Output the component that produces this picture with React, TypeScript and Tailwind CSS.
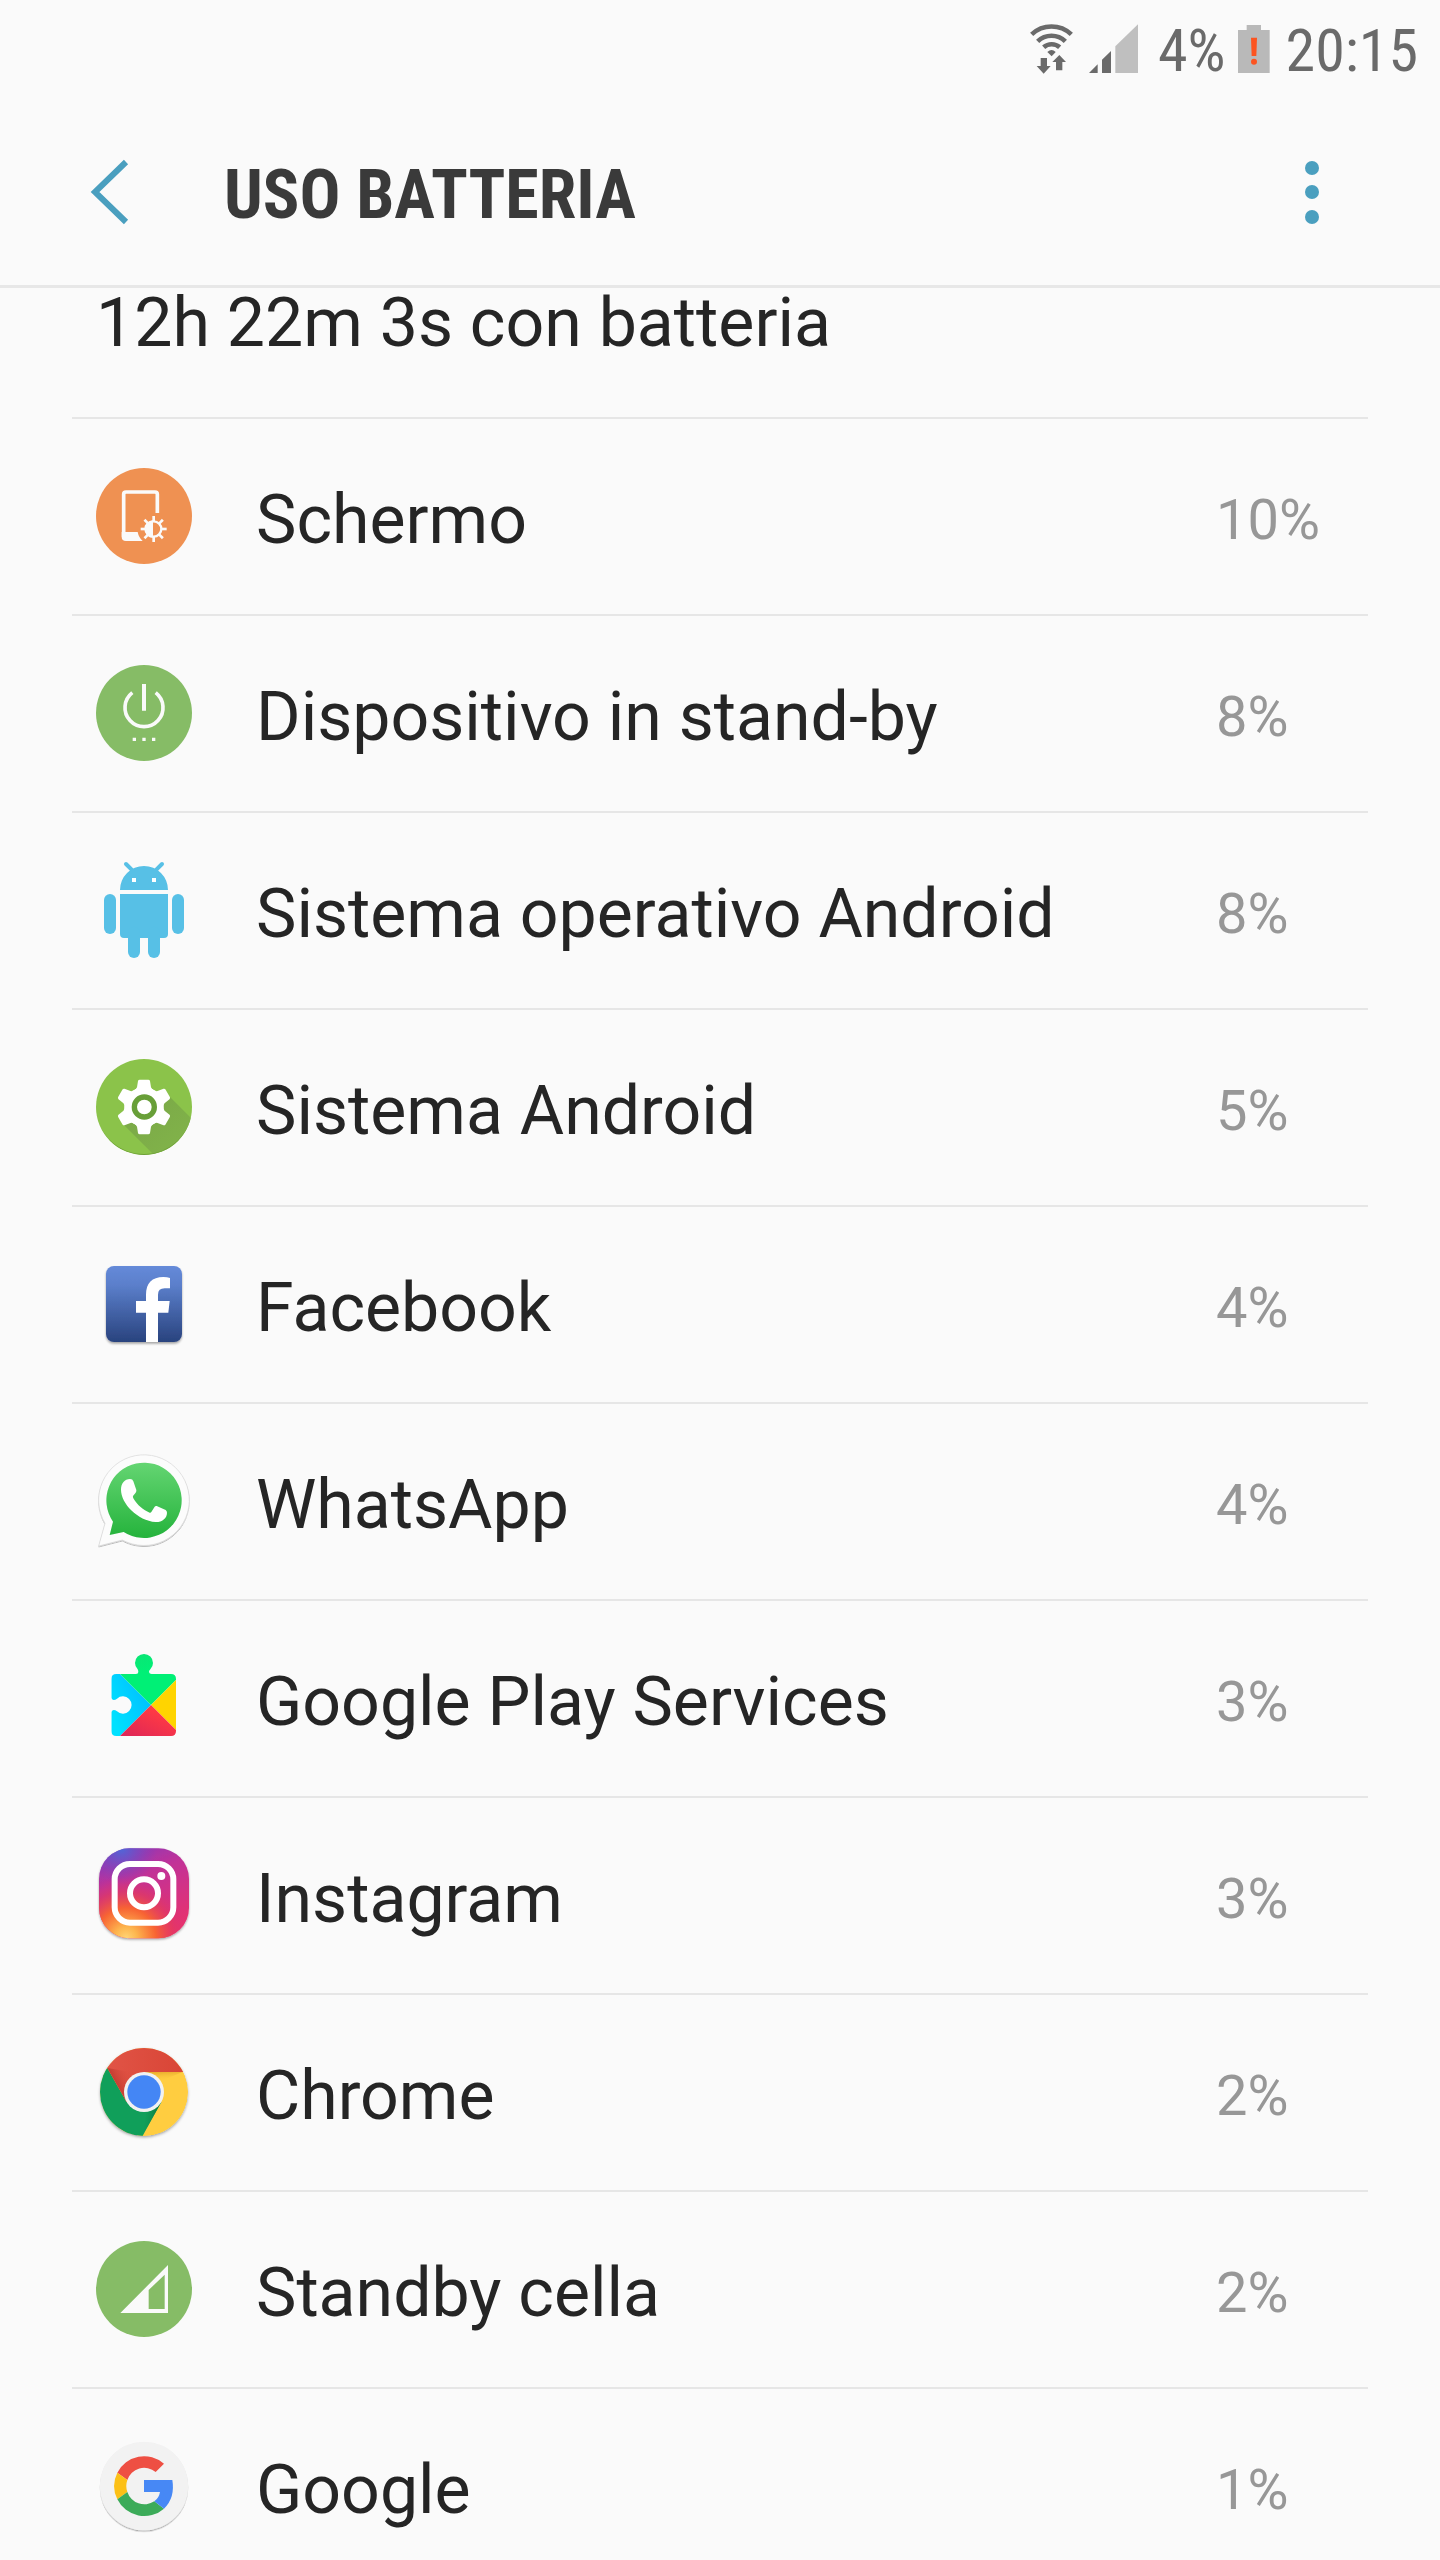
import type { ReactNode } from "react";

function WifiIcon() {
  return (
    <svg viewBox="87 66 129 153" className="h-[51px] w-[43px]" aria-label="Wi-Fi" fill="#6a6a6a">
      <g fill="none" stroke="#6a6a6a" strokeWidth="14">
        <path d="M92 100A87 87 0 0 1 211 100" />
        <path d="M110 121A60 60 0 0 1 193 121" />
        <path d="M128 139A36 36 0 0 1 176 139" />
      </g>
      <path d="M139 153Q152 141 164 153L152 166Z" />
      <path d="M119 171H138V195H149L128 218L107 195H119Z" />
      <path d="M175 162L195 183H184V208H165V183H154Z" />
    </svg>
  );
}

function SignalIcon() {
  return (
    <svg viewBox="264 66 147 153" className="h-[51px] w-[49px]" aria-label="Segnale" fill="#6a6a6a">
      <path d="M264 216L290 190V216ZM303 176L330 150V216H303Z" />
      <path fill="#bfbfbf" d="M343 136L411 70V216H343Z" />
    </svg>
  );
}

function BatteryIcon() {
  return (
    <svg viewBox="711 66 96 153" className="h-[51px] w-8" aria-label="Batteria scarica">
      <path fill="#b9b9b9" d="M711 87H737V72H780V87H806V216H711Z" />
      <path fill="#fc5420" d="M750 110H768L766 165H752Z" />
      <circle cx="759" cy="182" r="9" fill="#fc5420" />
    </svg>
  );
}

function Icon({ box, children }: { box: string; children: ReactNode }) {
  return (
    <svg viewBox={box} className="size-24 shrink-0 overflow-visible" aria-hidden="true">
      {children}
    </svg>
  );
}

const rays = [0, 45, 90, 135, 180, 225, 270, 315];
const teeth = [0, 60, 120, 180, 240, 300];

const screenIcon = (
  <Icon box="78 84 288 288">
    <circle cx="222" cy="228" r="144" fill="#ef9152" />
    <path d="M262 219V163Q262 156 255 156H168Q161 156 161 163V290" fill="none" stroke="#fafafa" strokeWidth="11" />
    <path d="M155 276H203Q206 292 218 303H168Q155 303 155 290Z" fill="#fafafa" />
    <circle cx="251" cy="267" r="23" fill="none" stroke="#fafafa" strokeWidth="7" />
    <path d="M249 241A26 26 0 0 0 249 293Z" fill="#fafafa" />
    {rays.map((a) => (
      <rect key={a} x="247" y="228" width="8" height="15" fill="#fafafa" transform={`rotate(${a} 251 267)`} />
    ))}
  </Icon>
);

const standbyIcon = (
  <Icon box="78 675 288 288">
    <circle cx="222" cy="819" r="144" fill="#86bc66" />
    <path d="M187 758A57 57 0 1 0 257 758" fill="none" stroke="#fafafa" strokeWidth="11" />
    <path d="M216 732H228V812H216ZM188 893H198V903H188ZM217 893H227V903H217ZM246 893H256V903H246Z" fill="#fafafa" />
  </Icon>
);

const androidIcon = (
  <Icon box="78 96 288 288">
    <g fill="#57c0e6">
      <path d="M150 180A72 72 0 0 1 294 180ZM150 192H294V312Q294 324 282 324H162Q150 324 150 312Z" />
      <rect x="102" y="192" width="36" height="120" rx="18" />
      <rect x="306" y="192" width="36" height="120" rx="18" />
      <rect x="174" y="290" width="36" height="94" rx="18" />
      <rect x="234" y="290" width="36" height="94" rx="18" />
    </g>
    <path d="M168 102L188 122M276 102L256 122" stroke="#57c0e6" strokeWidth="12" strokeLinecap="round" />
    <path d="M186 144H198V156H186ZM246 144H258V156H246Z" fill="#fff" />
  </Icon>
);

const systemIcon = (
  <Icon box="78 687 288 288">
    <defs>
      <clipPath id="system-disc">
        <circle cx="222" cy="831" r="144" />
      </clipPath>
      <linearGradient id="system-shadow" x1="0" y1="0" x2="1" y2="1">
        <stop offset="0.300" stopColor="#7cab48" />
        <stop offset="1" stopColor="#83b64a" />
      </linearGradient>
    </defs>
    <circle cx="222" cy="831" r="144" fill="#8bc34a" />
    <g clipPath="url(#system-disc)">
      <path d="M161 884L300 801L380 881V990H267Z" fill="url(#system-shadow)" />
      <path d="M78 831A144 144 0 0 0 366 831A144 141 0 0 1 78 831" fill="#6fa03a" />
    </g>
    <circle cx="222" cy="831" r="59" fill="#fff" />
    {teeth.map((a) => (
      <path
        key={a}
        d="M209 749H235Q239 749 240 753L243 772Q245 779 256 784L222 831L188 784Q199 779 201 772L204 753Q205 749 209 749Z"
        fill="#fff"
        transform={`rotate(${a} 222 831)`}
      />
    ))}
    <circle cx="223" cy="831" r="30" fill="none" stroke="#689f38" strokeWidth="16" />
  </Icon>
);

const facebookIcon = (
  <Icon box="78 78 288 288">
    <defs>
      <linearGradient id="fb-blue" x1="0" y1="0" x2="0" y2="1">
        <stop offset="0" stopColor="#658ad9" />
        <stop offset="0.250" stopColor="#5b7fcb" />
        <stop offset="1" stopColor="#29437e" />
      </linearGradient>
      <filter id="fb-shadow" x="-10%" y="-10%" width="120%" height="125%">
        <feDropShadow dx="0" dy="5" stdDeviation="3" floodOpacity="0.350" />
      </filter>
    </defs>
    <rect x="108" y="108" width="228" height="228" rx="24" fill="url(#fb-blue)" filter="url(#fb-shadow)" />
    <path
      d="M228 336V248H198V213H228V194C228 160 246 141 280 141Q292 141 300 144V175H284Q264 175 264 194V213H299L295 248H264V336Z"
      fill="#fff"
    />
  </Icon>
);

const whatsappIcon = (
  <Icon box="78 669 288 288">
    <defs>
      <linearGradient id="wa-green" x1="0" y1="0" x2="0" y2="1">
        <stop offset="0" stopColor="#64d572" />
        <stop offset="1" stopColor="#25b33c" />
      </linearGradient>
      <filter id="wa-shadow" x="-10%" y="-10%" width="120%" height="120%">
        <feDropShadow dx="0" dy="3" stdDeviation="2" floodOpacity="0.300" />
      </filter>
    </defs>
    <path
      d="M105 880A136 136 0 1 1 157 930L86 948Z"
      fill="#fcfcfc"
      stroke="#d6d6d6"
      strokeWidth="2"
      filter="url(#wa-shadow)"
    />
    <path d="M129 875A113 113 0 1 1 161 906L119 915Z" fill="url(#wa-green)" />
    <path
      d="M153 779C153 760 164 747 180 747Q188 747 190 754L199 780Q200 784 197 788L189 798Q188 801 190 805C202 826 220 840 239 848Q242 849 244 846L254 830Q256 827 260 828L287 840Q291 843 291 848C291 866 274 877 257 876C203 872 153 820 153 779Z"
      fill="#fff"
    />
  </Icon>
);

const playServicesIcon = (
  <Icon box="78 90 288 288">
    <defs>
      <clipPath id="puzzle">
        <path d="M139 162H198Q205 162 205 156Q205 152 203 148A27 27 0 1 1 241 148Q237 152 237 156Q238 162 245 162H303Q318 162 318 177V333Q318 348 303 348H139Q124 348 124 333V277Q125 271 131 270Q136 270 141 274A26 26 0 1 0 141 236Q136 240 131 240Q125 239 124 233V177Q124 162 139 162Z" />
      </clipPath>
      <linearGradient id="play-blue" x1="1" y1="0" x2="0" y2="1">
        <stop offset="0.200" stopColor="#00bcff" />
        <stop offset="0.850" stopColor="#00e1ff" />
      </linearGradient>
      <linearGradient id="play-red" x1="1" y1="0" x2="0" y2="1">
        <stop offset="0.300" stopColor="#ff3a44" />
        <stop offset="1" stopColor="#dc2558" />
      </linearGradient>
      <linearGradient id="play-green" x1="0" y1="0" x2="0.400" y2="1">
        <stop offset="0" stopColor="#0fe074" />
        <stop offset="0.500" stopColor="#00f076" />
      </linearGradient>
    </defs>
    <g clipPath="url(#puzzle)">
      <path d="M120 90V360H138L243 255L138 150Z" fill="url(#play-blue)" />
      <path d="M150 162L180 90H330V168L243 255Z" fill="url(#play-green)" />
      <path d="M330 168V342L243 255Z" fill="#ffd400" />
      <path d="M243 255L336 348H150Z" fill="url(#play-red)" />
    </g>
  </Icon>
);

const instagramIcon = (
  <Icon box="78 681 288 288">
    <defs>
      <linearGradient id="ig-base" x1="0.200" y1="0" x2="0.600" y2="1">
        <stop offset="0" stopColor="#8a3ab9" />
        <stop offset="0.350" stopColor="#c13198" />
        <stop offset="1" stopColor="#e9306c" />
      </linearGradient>
      <radialGradient id="ig-warm" cx="0.300" cy="1" r="0.700">
        <stop offset="0" stopColor="#ffd576" />
        <stop offset="0.180" stopColor="#fdb54e" />
        <stop offset="0.480" stopColor="#f9662f" stopOpacity="0.950" />
        <stop offset="0.750" stopColor="#e33a5c" stopOpacity="0.600" />
        <stop offset="1" stopColor="#d0307f" stopOpacity="0" />
      </radialGradient>
      <radialGradient id="ig-cool" cx="0.250" cy="0" r="0.400">
        <stop offset="0" stopColor="#4f68d8" />
        <stop offset="1" stopColor="#7a40c0" stopOpacity="0" />
      </radialGradient>
      <filter id="ig-shadow" x="-10%" y="-10%" width="120%" height="120%">
        <feDropShadow dx="0" dy="4" stdDeviation="3" floodOpacity="0.350" />
      </filter>
    </defs>
    <rect x="87" y="685" width="270" height="270" rx="92" fill="url(#ig-base)" filter="url(#ig-shadow)" />
    <rect x="87" y="685" width="270" height="270" rx="92" fill="url(#ig-warm)" />
    <rect x="87" y="685" width="270" height="270" rx="92" fill="url(#ig-cool)" />
    <g fill="none" stroke="#fff" strokeWidth="18">
      <rect x="134" y="732" width="176" height="176" rx="46" />
      <circle cx="222" cy="820" r="42" />
    </g>
    <circle cx="274" cy="768" r="12" fill="#fff" />
  </Icon>
);

const chromeIcon = (
  <Icon box="78 72 288 288">
    <defs>
      <filter id="chrome-shadow" x="-10%" y="-10%" width="120%" height="120%">
        <feDropShadow dx="0" dy="4" stdDeviation="4" floodOpacity="0.400" />
      </filter>
      <clipPath id="chrome-disc">
        <circle cx="222" cy="216" r="132" />
      </clipPath>
      <linearGradient id="chrome-red" x1="0" y1="0" x2="1" y2="0">
        <stop offset="0" stopColor="#e15547" />
        <stop offset="1" stopColor="#d84334" />
      </linearGradient>
      <linearGradient id="chrome-red-fold" x1="0" y1="0.700" x2="0.900" y2="0.200">
        <stop offset="0.200" stopColor="#b5342a" />
        <stop offset="0.900" stopColor="#dd4b3e" stopOpacity="0" />
      </linearGradient>
      <linearGradient id="chrome-gold-fold" x1="0" y1="0" x2="0.200" y2="1">
        <stop offset="0" stopColor="#e5a82a" />
        <stop offset="1" stopColor="#ffcd40" stopOpacity="0" />
      </linearGradient>
      <linearGradient id="chrome-green-fold" x1="1" y1="0.500" x2="0" y2="0.400">
        <stop offset="0.200" stopColor="#0b7a40" />
        <stop offset="1" stopColor="#109d58" stopOpacity="0" />
      </linearGradient>
    </defs>
    <circle cx="222" cy="216" r="131" fill="#ffcd40" filter="url(#chrome-shadow)" />
    <g clipPath="url(#chrome-disc)">
      <circle cx="222" cy="216" r="132" fill="#ffcd40" />
      <path d="M95 114L170 246L222 216L274 246L211 360H78V114Z" fill="#109f5a" />
      <path d="M95 114V72H366V156H222V216L170 246Z" fill="url(#chrome-red)" />
      <path d="M112 144L170 246L205 160Z" fill="url(#chrome-red-fold)" />
      <path d="M338 156H222L270 184Z" fill="url(#chrome-gold-fold)" />
      <path d="M217 348L274 246L232 262Z" fill="url(#chrome-green-fold)" />
    </g>
    <circle cx="222" cy="216" r="60" fill="#f1f1f1" />
    <circle cx="222" cy="216" r="50" fill="#4486f5" />
  </Icon>
);

const cellIcon = (
  <Icon box="78 663 288 288">
    <circle cx="222" cy="807" r="144" fill="#86bc66" />
    <path fillRule="evenodd" d="M151 879L294 735V879ZM236 810V867H284V764Z" fill="#fafafa" />
  </Icon>
);

const googleIcon = (
  <Icon box="78 234 288 288">
    <defs>
      <filter id="google-shadow" x="-10%" y="-10%" width="120%" height="120%">
        <feDropShadow dx="0" dy="4" stdDeviation="2" floodOpacity="0.300" />
      </filter>
    </defs>
    <circle cx="222" cy="378" r="133" fill="#f2f2f2" filter="url(#google-shadow)" />
    <path d="M142 338A90 90 0 0 1 282 311L257 336A53 53 0 0 0 172 360Z" fill="#ee4f43" />
    <path d="M142 338A90 90 0 0 0 142 418L172 396A54 54 0 0 1 172 360Z" fill="#fcc016" />
    <path d="M142 418A90 90 0 0 0 282 446L253 424A54 54 0 0 1 172 396Z" fill="#3cab59" />
    <path d="M222 360H307Q316 413 282 446L253 424Q267 414 270 396H222Z" fill="#4788f5" />
  </Icon>
);

const usage: { name: string; percent: string; icon: ReactNode }[] = [
  { name: "Schermo", percent: "10%", icon: screenIcon },
  { name: "Dispositivo in stand-by", percent: "8%", icon: standbyIcon },
  { name: "Sistema operativo Android", percent: "8%", icon: androidIcon },
  { name: "Sistema Android", percent: "5%", icon: systemIcon },
  { name: "Facebook", percent: "4%", icon: facebookIcon },
  { name: "WhatsApp", percent: "4%", icon: whatsappIcon },
  { name: "Google Play Services", percent: "3%", icon: playServicesIcon },
  { name: "Instagram", percent: "3%", icon: instagramIcon },
  { name: "Chrome", percent: "2%", icon: chromeIcon },
  { name: "Standby cella", percent: "2%", icon: cellIcon },
  { name: "Google", percent: "1%", icon: googleIcon },
];

export default function App() {
  return (
    <div className="flex h-screen flex-col overflow-hidden bg-[#fafafa] font-['Roboto',sans-serif] text-[#252525]">
      <div className="flex h-24 shrink-0 items-center justify-end pr-[22px] font-['Roboto_Condensed','Roboto',sans-serif] text-[60px] text-[#6a6a6a]">
        <WifiIcon />
        <span className="w-4" />
        <SignalIcon />
        <span className="pt-1.5 pl-5 leading-[90px]">4%</span>
        <span className="w-3" />
        <BatteryIcon />
        <span className="pt-1.5 pl-4 leading-[90px]">20:15</span>
      </div>

      <header className="flex h-48 shrink-0 items-center border-b-3 border-[#e7e7e7] pt-0.5 pr-24 pl-[88px]">
        <button type="button" aria-label="Indietro" className="flex h-24 w-[136px] items-center">
          <svg viewBox="0 0 42 68" className="h-[68px] w-[42px]" fill="none" stroke="#4a9fbf" strokeWidth="6">
            <path d="M38 4L7 34L38 64" />
          </svg>
        </button>
        <h1 className="flex-1 pt-1.5 font-['Roboto_Condensed','Roboto',sans-serif] text-[68px] leading-[80px] font-bold text-[#3a3a3a]">
          USO BATTERIA
        </h1>
        <button type="button" aria-label="Altre opzioni" className="flex h-24 w-16 items-center justify-center">
          <svg viewBox="0 0 16 64" className="h-16 w-4" fill="#4a9fbf">
            <circle cx="8" cy="8" r="7" />
            <circle cx="8" cy="32" r="7" />
            <circle cx="8" cy="57" r="7" />
          </svg>
        </button>
      </header>

      <main className="min-h-0 flex-1 px-[72px]">
        <p className="px-6 pb-[59px] text-[68px] leading-[70px]">12h 22m 3s con batteria</p>
        <ul>
          {usage.map((app) => (
            <li key={app.name} className="flex items-center border-t-2 border-[#e6e6e6] pt-[49px] pb-[50px] pl-6">
              {app.icon}
              <span className="min-w-0 flex-1 truncate pt-2 pl-16 text-[68px] leading-[88px]">{app.name}</span>
              <span className="w-[152px] pt-2 text-[56px] leading-[88px] text-[#979797]">{app.percent}</span>
            </li>
          ))}
        </ul>
      </main>
    </div>
  );
}
